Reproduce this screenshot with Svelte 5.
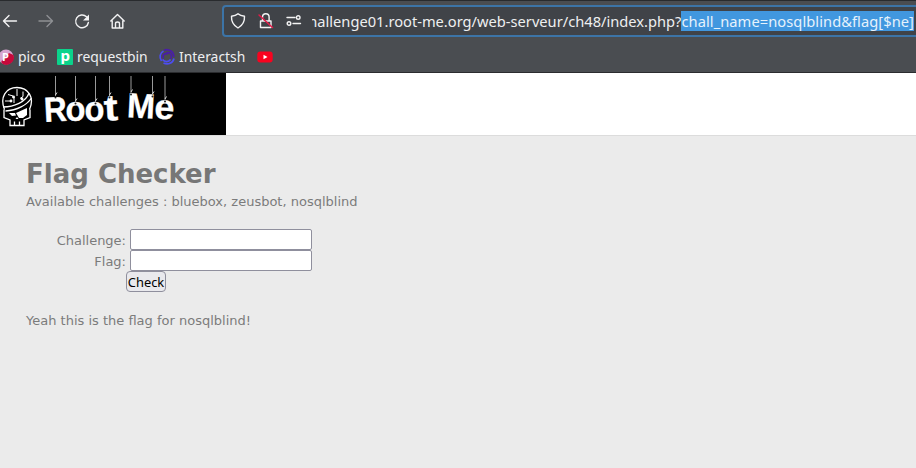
<script>
  let challenge = $state('');
  let flag = $state('');
  const letters = [
    { c: 'R', x: 44, y: 48.5, size: 35, w: 23, r: -3 },
    { c: 'o', x: 65.5, y: 48, size: 35, w: 20, r: 0 },
    { c: 'o', x: 84.5, y: 48, size: 35, w: 20, r: 0 },
    { c: 't', x: 104, y: 47.5, size: 37, w: 14, r: -3 },
    { c: 'M', x: 127, y: 45, size: 35, w: 28, r: 3 },
    { c: 'e', x: 154.5, y: 46, size: 35, w: 20, r: 4 }
  ];
  const strings = [[55.5, 23], [75.5, 29], [95.5, 29], [109.5, 23], [131, 20], [152.5, 22], [165, 27]];
</script>

<div class="window">
  <header class="chrome">
    <div class="toolbar">
      <nav class="nav">
        <svg width="16" height="16" viewBox="0 0 16 16"><path d="M14.500 8H1.500M7 2.500L1.500 8 7 13.500" /></svg>
        <svg class="off" width="16" height="16" viewBox="0 0 16 16"><path d="M1 8h13.500M9 2.500l5.500 5.500L9 13.500" /></svg>
        <svg width="16" height="16" viewBox="0 0 16 16"><path d="M12.500 3.700A6.400 6.400 0 1 0 14.400 9.500" /><path class="solid" d="M15 1.500v6H9z" /></svg>
        <svg width="16" height="16" viewBox="0 0 16 16"><path d="M.8 8L7.500 1.500l6.700 6.500M2.200 7.500V15h10.600V7.500M5.500 15v-4.500q0-1.500 2-1.500t2 1.500V15" /></svg>
      </nav>
      <div class="urlbar">
        <svg class="shield" width="16" height="16" viewBox="0 0 16 16"><path d="M8 .8C6.200 2.400 4 3 1.500 3.300 1.200 9 3.500 12.500 8 15 12.500 12.500 14.800 9 14.500 3.300 12 3 9.800 2.400 8 .8z" /></svg>
        <svg class="lock" width="16" height="16" viewBox="0 0 16 16"><path d="M2.500 8h10.500v6.500h-10.500zM4.500 8V4a3.300 3.300 0 0 1 6.600 0V8" /><path class="slash" d="M1 2l13.500 12.500" /></svg>
        <svg class="prefs" width="16" height="12" viewBox="0 0 16 12"><path d="M1 2.500h8M7 8.500h7.500" /><circle cx="12.200" cy="2.500" r="1.800" /><circle cx="3" cy="8.500" r="1.800" /></svg>
        <div class="url"><span class="address">hallenge01.root-me.org/web-serveur/ch48/index.php?</span><span class="selected">chall_name=nosqlblind&amp;flag[$ne]</span></div>
      </div>
    </div>
    <div class="bookmarks">
      <div class="bm pico">
        <svg width="16" height="16" viewBox="0 0 16 16"><circle cx="6" cy="8" r="7.500" class="lilac" /><path class="crimson" d="M13.500 6A7.500 7.500 0 0 1 1.500 14V12L9 4z" /><text x="2" y="12" font-size="11">P</text></svg>
        <span>pico</span>
      </div>
      <div class="bm requestbin">
        <svg width="16" height="16" viewBox="0 0 16 16"><rect width="16" height="16" rx="1" class="green" /><text x="3.500" y="11.500" font-size="15">p</text></svg>
        <span>requestbin</span>
      </div>
      <div class="bm interactsh">
        <svg width="16" height="16" viewBox="0 0 16 16"><g class="swirl"><path class="deep" d="M5 1.200C10-.6 15 3 14.800 8" /><path class="deep" d="M7.500 3.800c4-1 6 2.500 4.500 6" /><path d="M15 9.500c-1 4.500-6 6.500-10.500 4.500" /><path d="M11.500 10.500c-2 3-6 2.500-8 0" /><path d="M2.500 12C0 8.500.8 4 4.500 2" /><path class="deep" d="M4.500 9.500C3 6 5.500 3.500 9 5" /></g></svg>
        <span>Interactsh</span>
      </div>
      <svg width="16" height="12" viewBox="0 0 16 12"><rect x=".3" y=".5" width="15.400" height="11" rx="3" class="red" /><path class="play" d="M6.500 3.800L10.500 6l-4 2.200z" /></svg>
    </div>
  </header>

  <div class="banner">
    <svg class="logo" width="226" height="62" viewBox="0 0 226 62">
      <g class="skull">
        <path d="M4.500 36.500C-.5 24 6 14.500 17 14.500S35 24 29.500 36.500M4 36.500v8l6 2.500v5.500h14V47l6-2.500v-8" />
        <path d="M3 34C14 34 26 29 29 20M5.500 38C17 37.500 27 32 31.500 25" />
        <path class="trace" d="M5 28h6M8 21.500l5 1.500M14 24v6M17 16v7M23 18.500v5l-3 2" />
        <path d="M14.500 52v-3.500M19.500 52v-3.500" />
        <path class="bone" d="M16 40l11-5v7l-4 3h-4zM9 40h6l1 2.500-4 .5zM15.500 46l1.500-2 1.500 2z" />
        <circle cx="13.500" cy="24" r=".8" /><circle cx="11" cy="28" r=".8" /><circle cx="22" cy="26" r=".8" />
      </g>
      {#each letters as l}
        <text x={l.x} y={l.y} font-size={l.size} textLength={l.w} lengthAdjust="spacingAndGlyphs" transform={`rotate(${l.r} ${l.x + l.w / 2} ${l.y - 10})`}>{l.c}</text>
      {/each}
      {#each strings as [x, y]}
        <path class="string" d={`M${x} 3V${y}`} />
        <circle class="hole" cx={x} cy={y + 1.5} r="1" />
        <path class="knot" d={`M${x} ${y - 1}l1.500-2.500`} />
      {/each}
    </svg>
  </div>

  <main>
    <h1>Flag Checker</h1>
    <p>Available challenges : bluebox, zeusbot, nosqlblind</p>
    <form onsubmit={(e) => e.preventDefault()}>
      <div class="row"><label for="challenge">Challenge:</label><input id="challenge" bind:value={challenge} /></div>
      <div class="row"><label for="flag">Flag:</label><input id="flag" bind:value={flag} /></div>
      <button>Check</button>
    </form>
    <p>Yeah this is the flag for nosqlblind!</p>
  </main>
</div>

<style>
  .window { width: 916px; height: 468px; overflow: hidden; display: flex; flex-direction: column; background: #ebebeb; box-sizing: border-box; }
  svg { display: block; flex: none; fill: none; overflow: visible; }
  .chrome { height: 73px; box-sizing: border-box; background: #4a4d51; border-top: 1px solid #292b2e; border-bottom: 1px solid #2b2c2f; font-family: "Noto Sans", sans-serif; color: #eeeff0; }
  .toolbar { display: flex; height: 40px; align-items: center; }
  .nav { display: flex; flex: none; gap: 20px; width: 220px; padding-left: 2px; box-sizing: border-box; }
  .nav svg, .shield, .lock, .prefs { stroke: #f3f3f4; stroke-width: 1.4; stroke-linejoin: round; stroke-linecap: round; }
  .nav .off { stroke: #8e9093; }
  .nav .solid { fill: #f3f3f4; stroke: none; }
  .urlbar { display: flex; align-items: center; width: 700px; height: 32px; flex: none; box-sizing: border-box; margin-left: 2px; border: 2px solid #3c74a7; border-radius: 4px; background: #404348; }
  .shield { margin-left: 6px; }
  .lock { margin-left: 12px; }
  .lock .slash { stroke: #e51a48; stroke-width: 1.5; }
  .prefs { margin-left: 12px; }
  .url { display: flex; justify-content: flex-end; width: 602px; margin-left: 10px; overflow: hidden; white-space: pre; font-size: 14.67px; line-height: 20px; }
  .address, .selected { flex: none; }
  .selected { background: #4197df; color: #e6f2fc; letter-spacing: .065px; }
  .bookmarks { display: flex; align-items: center; height: 31px; font-size: 13.9px; line-height: 20px; }
  .bm { display: flex; align-items: center; }
  .bm text { fill: #fff; font-family: "Noto Sans", sans-serif; font-weight: 700; }
  .pico { width: 57px; gap: 2px; }
  .requestbin { width: 102px; gap: 4px; }
  .interactsh { width: 98px; gap: 4px; }
  .lilac { fill: #d7a5cf; }
  .crimson { fill: #c6093b; }
  .green { fill: #0bd38b; }
  .swirl { stroke: #4c4df0; stroke-width: 1.7; }
  .deep { stroke: #4a1da8; }
  .red { fill: #f8031f; }
  .play { fill: #fff; }
  .banner { height: 62px; flex: none; background: #fff; border-bottom: 1px solid #dcdcdc; }
  .logo { background: #000; }
  .logo text { fill: #fff; stroke: #fff; stroke-width: .3; font-family: "Liberation Sans", sans-serif; font-weight: 700; }
  .skull { stroke: #fff; stroke-width: 1.3; }
  .skull .trace { stroke-width: 1; }
  .skull .bone { fill: #fff; stroke: none; }
  .string { stroke: #999; stroke-width: 1; }
  .hole { fill: #222; }
  .knot { stroke: #ddd; stroke-width: 1; }
  main { padding: 22px 26px; font: 13px/16px "DejaVu Sans", sans-serif; color: #7b7b7b; }
  h1 { margin: 0; font-size: 26px; line-height: 32px; color: #777; }
  p { margin: 4px 0 0; }
  form { margin: 19px 0 21px; display: flex; flex-direction: column; align-items: flex-start; }
  .row { display: flex; align-items: center; gap: 4px; height: 21px; }
  label { width: 100px; padding-top: 2px; text-align: right; }
  input { width: 182px; height: 21px; box-sizing: border-box; border: 1px solid #8f8f9d; border-radius: 2px; background: #fff; outline: none; padding: 1px 2px; }
  button { width: 40px; height: 21px; margin-left: 100px; box-sizing: border-box; border: 1px solid #8f8f9d; border-radius: 4px; background: #e9e9ed; padding: 0; font: 12.9px/18px "Noto Sans", sans-serif; color: #000; white-space: nowrap; }
</style>
